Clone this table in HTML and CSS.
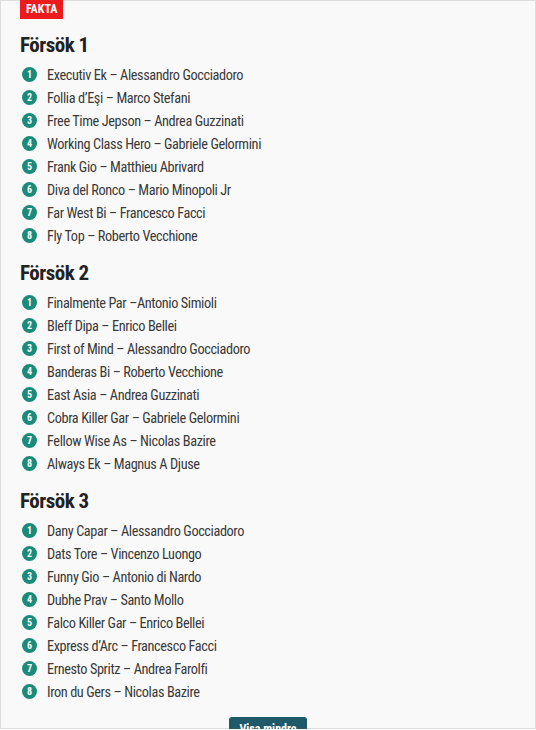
FILE: index.html
```html
<!DOCTYPE html>
<html lang="sv">
<head>
<meta charset="utf-8">
<link rel="stylesheet" href="styles.css">
</head>
<body>
<div class="box">
  <span class="badge">FAKTA</span>
  <section class="group">
    <h2>Försök 1</h2>
    <ol>
      <li><span class="num">1</span>Executiv Ek – Alessandro Gocciadoro</li>
      <li><span class="num">2</span>Follia d’Eşi – Marco Stefani</li>
      <li><span class="num">3</span>Free Time Jepson – Andrea Guzzinati</li>
      <li><span class="num">4</span>Working Class Hero – Gabriele Gelormini</li>
      <li><span class="num">5</span>Frank Gio – Matthieu Abrivard</li>
      <li><span class="num">6</span>Diva del Ronco – Mario Minopoli Jr</li>
      <li><span class="num">7</span>Far West Bi – Francesco Facci</li>
      <li><span class="num">8</span>Fly Top – Roberto Vecchione</li>
    </ol>
  </section>
  <section class="group">
    <h2>Försök 2</h2>
    <ol>
      <li><span class="num">1</span>Finalmente Par –Antonio Simioli</li>
      <li><span class="num">2</span>Bleff Dipa – Enrico Bellei</li>
      <li><span class="num">3</span>First of Mind – Alessandro Gocciadoro</li>
      <li><span class="num">4</span>Banderas Bi – Roberto Vecchione</li>
      <li><span class="num">5</span>East Asia – Andrea Guzzinati</li>
      <li><span class="num">6</span>Cobra Killer Gar – Gabriele Gelormini</li>
      <li><span class="num">7</span>Fellow Wise As – Nicolas Bazire</li>
      <li><span class="num">8</span>Always Ek – Magnus A Djuse</li>
    </ol>
  </section>
  <section class="group">
    <h2>Försök 3</h2>
    <ol>
      <li><span class="num">1</span>Dany Capar – Alessandro Gocciadoro</li>
      <li><span class="num">2</span>Dats Tore – Vincenzo Luongo</li>
      <li><span class="num">3</span>Funny Gio – Antonio di Nardo</li>
      <li><span class="num">4</span>Dubhe Prav – Santo Mollo</li>
      <li><span class="num">5</span>Falco Killer Gar – Enrico Bellei</li>
      <li><span class="num">6</span>Express d’Arc – Francesco Facci</li>
      <li><span class="num">7</span>Ernesto Spritz – Andrea Farolfi</li>
      <li><span class="num">8</span>Iron du Gers – Nicolas Bazire</li>
    </ol>
  </section>
  <div class="more">
    <button class="toggle">Visa mindre</button>
  </div>
</div>
</body>
</html>
```

FILE: styles.css
```css
html, body {
  margin: 0;
  padding: 0;
  background: #ffffff;
}
body {
  font-family: "Roboto", sans-serif;
  font-stretch: 75%;
  color: #333333;
}
.box {
  background: #f9f9f9;
  border: 1px solid #dddddd;
  padding: 0 19px;
  box-sizing: border-box;
  width: 536px;
}
.badge {
  display: inline-block;
  background: #ec1c1c;
  color: #ffffff;
  font-weight: 700;
  font-size: 12px;
  line-height: 19px;
  padding: 0 6px;
  margin-top: -1px;
  vertical-align: top;
}
.group {
  margin-top: 12px;
}
.group + .group {
  margin-top: 13px;
}
h2 {
  margin: 0 0 5px;
  font-size: 21px;
  line-height: 26px;
  font-weight: 700;
  letter-spacing: -0.5px;
  color: #222222;
}
ol {
  list-style: none;
  margin: 0;
  padding: 0;
}
li {
  display: flex;
  align-items: center;
  height: 23px;
  font-size: 14.3px;
  letter-spacing: -0.4px;
  color: #3a3a3a;
}
.num {
  flex: none;
  width: 15px;
  height: 15px;
  border-radius: 50%;
  background: #1a8a79;
  color: #ffffff;
  font-weight: 700;
  font-size: 10px;
  letter-spacing: 0;
  line-height: 15px;
  text-align: center;
  margin: 0 10px 0 2px;
}
.more {
  display: flex;
  justify-content: center;
  margin-top: 14px;
  margin-bottom: -13px;
}
.toggle {
  background: #1f5a6a;
  color: #ffffff;
  border: 0;
  border-radius: 3px;
  font-family: "Roboto", sans-serif;
  font-stretch: 75%;
  font-weight: 700;
  font-size: 12px;
  height: 24px;
  padding: 0 10px;
}
```
